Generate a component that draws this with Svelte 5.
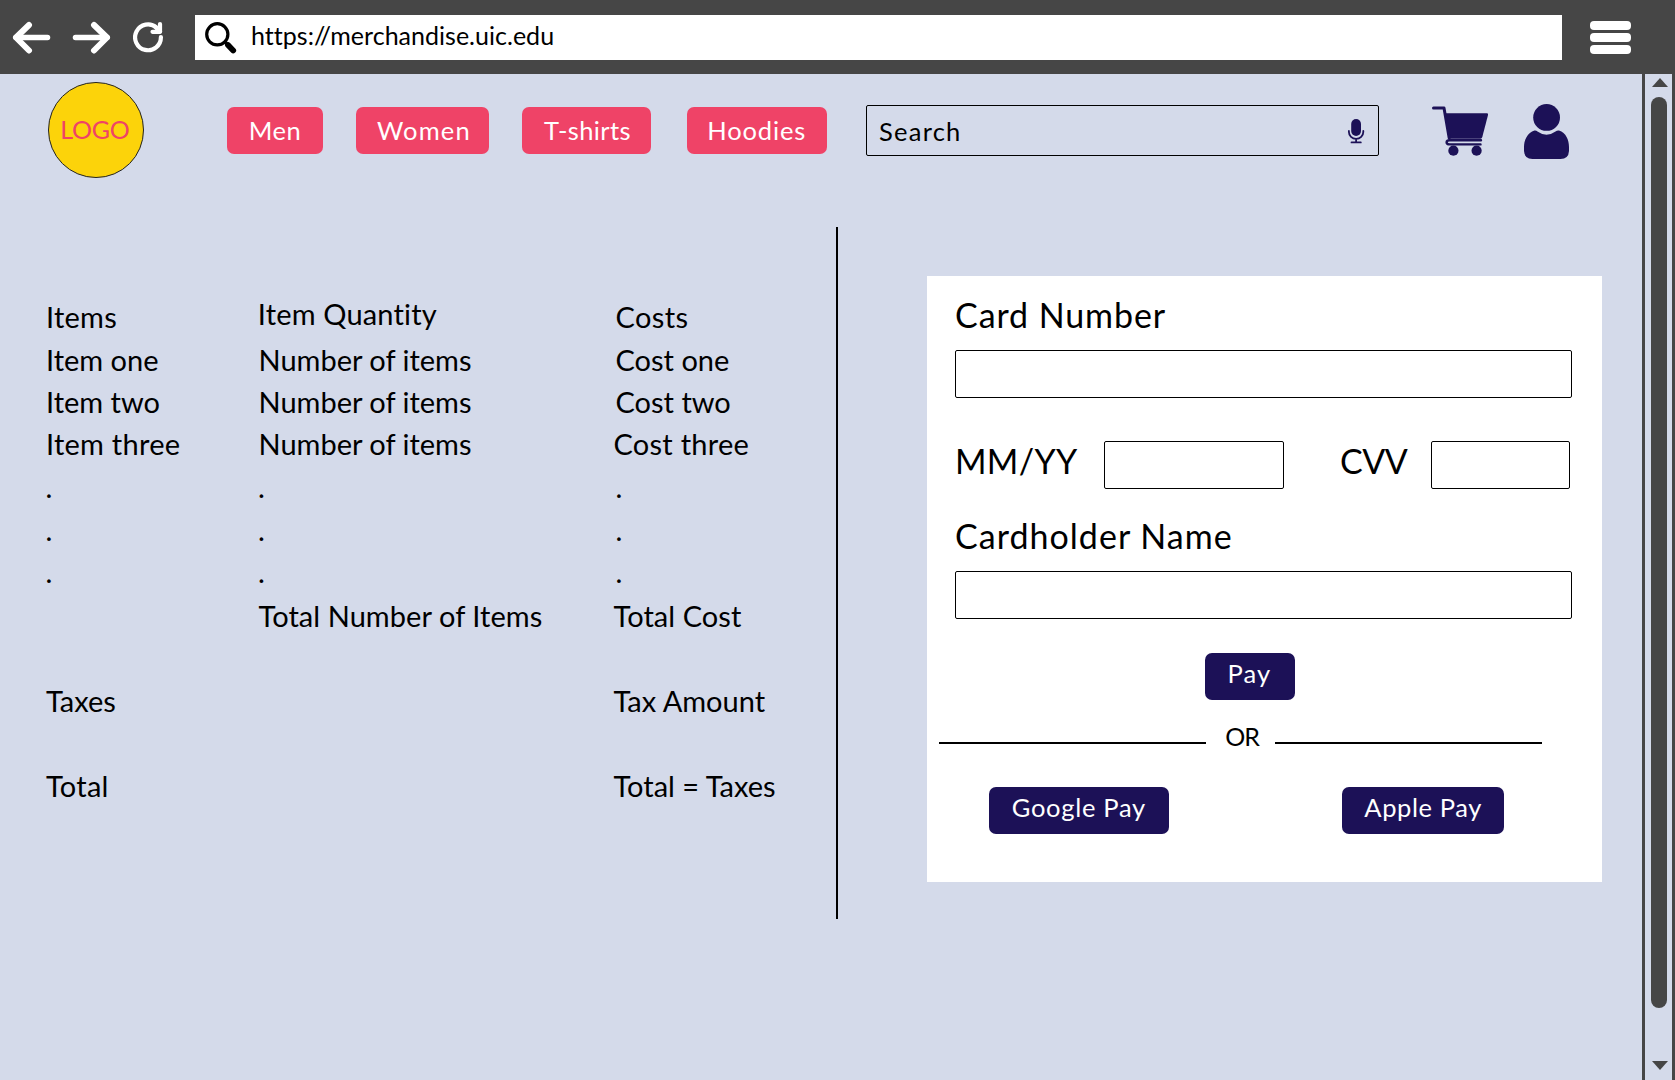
<script>
  const nav = [
    { label: 'Men', key: 'men' },
    { label: 'Women', key: 'women' },
    { label: 'T-shirts', key: 'tshirts' },
    { label: 'Hoodies', key: 'hoodies' }
  ];

  const rows = [
    [['Items', 'w1'], ['Item Quantity', 'raised'], ['Costs', 'c w2']],
    [['Item one', ''], ['Number of items', ''], ['Cost one', 'c']],
    [['Item two', ''], ['Number of items', ''], ['Cost two', 'c']],
    [['Item three', 'w1'], ['Number of items', ''], ['Cost three', 'w1']],
    [['.', 'dot'], ['.', 'dot'], ['.', 'c']],
    [['.', 'dot'], ['.', 'dot'], ['.', 'c']],
    [['.', 'dot'], ['.', 'dot'], ['.', 'c']],
    [['', ''], ['Total Number of Items', 'w0'], ['Total Cost', 'w0']],
    [['Taxes', ''], ['', ''], ['Tax Amount', '']],
    [['Total', 'w1'], ['', ''], ['Total = Taxes', '']]
  ];
</script>

<div class="window">
  <header class="toolbar">
    <svg class="back" width="39" height="33" viewBox="0 0 39 33"><path d="M17 4 L4 16.5 L17 29.5" class="head" /><path d="M4 16.5 H35.5" class="shaft" /></svg>
    <svg class="forward" width="39" height="33" viewBox="0 0 39 33"><path d="M22 4 L35 16.5 L22 29.5" class="head" /><path d="M3.5 16.5 H35" class="shaft" /></svg>
    <svg class="reload" width="32" height="32" viewBox="0 0 32 32">
      <path d="M27.9 16 A12.9 12.9 0 1 1 23.5 6.6" />
      <path d="M27 3 V10.8 H19.5" /><path d="M23 6.5 L27 10.5" />
    </svg>
    <div class="address">
      <svg width="32" height="32" viewBox="0 0 32 32"><circle cx="12.3" cy="12.3" r="10.6" /><path d="M20 20 L23 23" class="neck" /><path d="M23 23 L28.2 28.4" class="grip" /></svg>
      <span class="url">https://merchandise.uic.edu</span>
    </div>
    <div class="menu"><i></i><i></i><i></i></div>
  </header>

  <div class="body">
    <main>
      <div class="topnav">
        <div class="logo">LOGO</div>
        {#each nav as item}
          <button class="pink {item.key}">{item.label}</button>
        {/each}
        <div class="search">
          <span>Search</span>
          <svg width="17" height="25" viewBox="0 0 17 25">
            <rect x="3.2" y="0" width="9.8" height="17" rx="4.9" class="fill" />
            <path d="M0.9 12 V13 A7.2 6.8 0 0 0 15.3 13 V12 M8.1 19.8 V23 M3.5 23.4 H12.8" class="line" />
          </svg>
        </div>
        <svg class="cart" width="56" height="50" viewBox="0 0 56 50">
          <path d="M13 7.2 H55 Q56.3 7.4 56 9 L50.3 31 Q49.8 32.8 48.5 32.8 H16.5 Z" class="fill" />
          <path d="M1.5 2 H12 L17.2 32" class="line" />
          <path d="M49 34.3 H17.5 Q14.6 34.3 14.6 36.2 Q14.6 38.4 17.8 38.4 H48.5" class="line rail" />
          <circle cx="21.4" cy="44.7" r="5.1" class="fill" /><circle cx="44.6" cy="44.7" r="5.1" class="fill" />
        </svg>
        <svg class="user" width="45" height="55" viewBox="0 0 45 55">
          <circle cx="22.6" cy="13.4" r="13.4" />
          <path d="M10.5 26.5 Q12.3 26.3 13.5 27.5 Q22.5 34 31.5 27.5 Q33 26.3 35 26.5 C42 28.5 45 36 45 43 V47 Q44.5 55 36.5 55 H8.5 Q0.5 55 0 47 V43 C0 36 3.5 28.5 10.5 26.5 Z" />
        </svg>
      </div>

      <div class="content">
        <section class="order">
          {#each rows as row}
            {#each row as [text, kind]}
              <span class={kind}>{text}</span>
            {/each}
          {/each}
        </section>
        <div class="divider"></div>
        <section class="card">
          <div class="label number">Card Number</div>
          <div class="field"></div>
          <div class="split">
            <div class="label mmyy">MM/YY</div>
            <div class="field expiry"></div>
            <div class="label cvv">CVV</div>
            <div class="field code"></div>
          </div>
          <div class="label holder">Cardholder Name</div>
          <div class="field"></div>
          <button class="navy pay">Pay</button>
          <div class="or"><hr /><span>OR</span><hr /></div>
          <div class="wallets">
            <button class="navy google">Google Pay</button>
            <button class="navy apple">Apple Pay</button>
          </div>
        </section>
      </div>
    </main>

    <aside class="scrollbar">
      <svg width="16" height="9" viewBox="0 0 16 9"><path d="M8 0 L16 9 H0 Z" /></svg>
      <div class="thumb"></div>
      <svg width="16" height="9" viewBox="0 0 16 9"><path d="M8 9 L16 0 H0 Z" /></svg>
    </aside>
  </div>
</div>

<style>
  :global(body) { margin: 0; overflow: hidden; }
  * { box-sizing: border-box; }
  .window {
    width: 1675px; height: 1080px; display: flex; flex-direction: column;
    background: #d4daea; color: #000; font-family: Lato, "Liberation Sans", sans-serif;
    font-size: 25px; font-variant-ligatures: none; white-space: nowrap;
  }
  svg { display: block; flex: none; }

  .toolbar { height: 74px; flex: none; background: #464646; display: flex; align-items: flex-start; padding: 15px 0 0 12px; }
  .toolbar > svg { fill: none; stroke: #fff; stroke-linecap: round; stroke-linejoin: round; margin-top: 6px; }
  .head { stroke-width: 6; }
  .shaft { stroke-width: 5.5; }
  .forward { margin-left: 21px; }
  .reload { margin-left: 22px; stroke-width: 4.2; }
  .address { width: 1367px; height: 45px; margin-left: 30px; background: #fff; display: flex; padding: 7px 0 0 10px; }
  .address svg { fill: none; stroke: #000; stroke-width: 3.2; stroke-linecap: round; }
  .address .neck { stroke-width: 3.5; }
  .address .grip { stroke-width: 5.8; }
  .url { line-height: 28px; margin-left: 14px; letter-spacing: 0.02px; margin-top: -1px; }
  .menu { display: flex; flex-direction: column; gap: 3px; margin: 6px 0 0 28px; }
  .menu i { width: 41px; height: 9px; border-radius: 4px; background: #fff; }

  .body { flex: 1; display: flex; min-height: 0; }
  main { width: 1642px; display: flex; flex-direction: column; }
  .topnav { display: flex; align-items: flex-start; height: 153px; padding-left: 48px; }
  .logo {
    width: 96px; height: 96px; border-radius: 50%; margin: 8px 83px 0 0; border: 1px solid #222;
    background: #fcd30a; color: #ef4367; line-height: 93px; padding-left: 11.2px; letter-spacing: -0.2px;
  }
  button { border: 0; border-radius: 7px; height: 47px; font: inherit; font-size: 25.5px; padding: 0; text-align: left; color: #fff; flex: none; }
  .pink { background: #ef4367; margin-top: 33px; line-height: 47px; }
  .men { width: 96px; padding-left: 21.7px; letter-spacing: 0.5px; margin-right: 33px; }
  .women { width: 133px; padding-left: 21px; letter-spacing: 1.15px; margin-right: 33px; }
  .tshirts { width: 129px; padding-left: 22px; letter-spacing: 0.4px; margin-right: 36px; }
  .hoodies { width: 140px; padding-left: 20.3px; letter-spacing: 0.85px; margin-right: 39px; }
  .search {
    width: 513px; height: 51px; margin-top: 31px; border: 1px solid #000; border-radius: 2px; display: flex;
    justify-content: space-between; padding: 13px 13px 0 12px;
  }
  .search span { font-size: 25.5px; letter-spacing: 1.25px; line-height: 24px; }
  .fill, .user { fill: #1c1157; }
  .line { fill: none; stroke: #1c1157; stroke-linecap: round; stroke-linejoin: round; stroke-width: 1.8; }
  .cart { margin: 32px 0 0 53px; }
  .cart .line { stroke-width: 3; }
  .cart .rail { stroke-width: 2.4; }
  .user { margin: 30px 0 0 36px; }

  .content { display: flex; align-items: flex-start; }
  .order {
    width: 836px; padding: 69px 0 0 46px; display: grid; font-size: 29px; line-height: 42px;
    grid-template-columns: 212.5px 355px 1fr;
    grid-template-rows: 43px 42px 42px 43px 43px 42px 44px 85px 85px 42px;
  }
  .w0 { letter-spacing: 0.06px; }
  .w1 { letter-spacing: 0.25px; }
  .w2 { letter-spacing: 0.4px; }
  .c { padding-left: 2px; }
  .dot { margin-left: -0.5px; }
  .raised { margin: -3px 0 0 -0.7px; letter-spacing: 0.17px; }
  .divider { width: 2px; height: 692px; background: #000; }

  .card { width: 675px; height: 606px; margin: 49px 0 0 89px; background: #fff; display: flex; flex-direction: column; padding: 0 0 0 28px; }
  .label { font-size: 34px; line-height: 40px; }
  .field { width: 617px; height: 48px; border: 1px solid #000; border-radius: 2px; flex: none; }
  .number { margin: 19px 0 15px; letter-spacing: 0.92px; }
  .split { display: flex; align-items: flex-start; margin: 43px 0 17px; }
  .mmyy { width: 149px; letter-spacing: 0.3px; }
  .expiry { width: 180px; }
  .cvv { width: 147px; padding-left: 56px; letter-spacing: -0.5px; }
  .code { width: 139px; }
  .holder { margin: 10px 0 15px; letter-spacing: 1.03px; }
  .navy { background: #1c1157; line-height: 40px; padding-bottom: 7px; }
  .pay { width: 90px; padding-left: 22.5px; letter-spacing: 1.1px; margin: 34px 0 0 250px; }
  .or { display: flex; width: 603px; height: 30px; margin: 27px 0 0 -16px; }
  hr { border: 0; margin: 15px 0 0; width: 267px; height: 2px; background: #000; }
  .or span { width: 69px; padding-left: 19.3px; letter-spacing: -1px; line-height: 18px; }
  .wallets { display: flex; gap: 173px; margin: 30px 0 0 34px; }
  .google { width: 180px; padding-left: 22.7px; letter-spacing: 0.72px; }
  .apple { width: 162px; padding-left: 22.3px; letter-spacing: 0.62px; }

  .scrollbar { width: 33px; border: solid #464646; border-width: 0 3px; padding: 4px 0 10px 7px; display: flex; flex-direction: column; align-items: flex-start; }
  .scrollbar svg { fill: #464646; margin-left: -0.3px; }
  .thumb { width: 16px; height: 911px; margin: 10px 0 auto -1px; border-radius: 8px; background: #464646; }
</style>
